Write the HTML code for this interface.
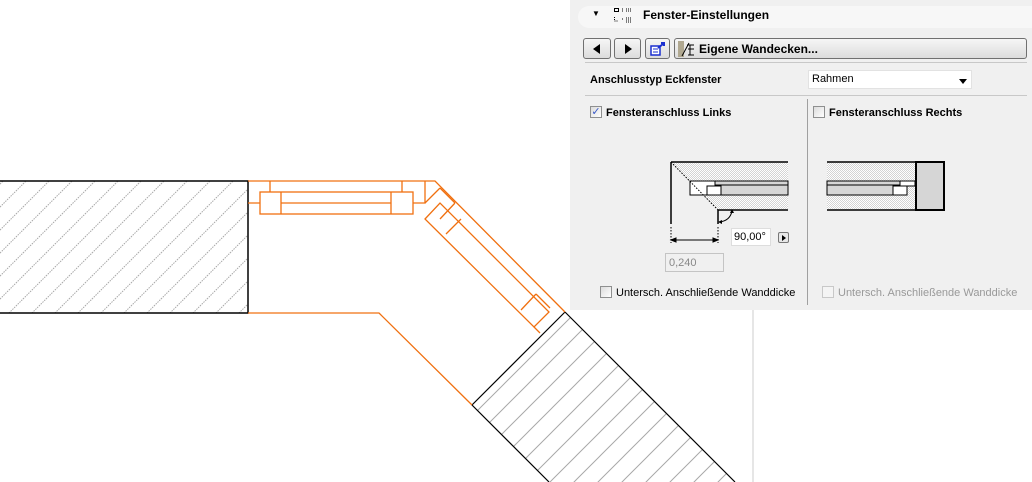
<!DOCTYPE html>
<html><head><meta charset="utf-8"><style>
body{margin:0;width:1032px;height:482px;background:#fff;position:relative;overflow:hidden;font-family:"Liberation Sans",Arial,sans-serif}
.a{position:absolute}
#panel{left:570px;top:0;width:462px;height:310px;background:#f0f0f0}
.btn{position:absolute;top:38px;height:21px;border:1px solid #707070;border-radius:3px;background:linear-gradient(#f6f6f6,#dcdcdc);box-sizing:border-box}
.b{font-weight:bold;font-size:11px;color:#000}
.cb{position:absolute;width:12px;height:12px;border:1px solid #8e8f8f;background:linear-gradient(135deg,#dcdcdc,#fff);box-sizing:border-box}
</style></head><body>
<svg class="a" style="left:0;top:0" width="1032" height="482">
<defs>
<pattern id="h1" patternUnits="userSpaceOnUse" width="23" height="23"><path d="M-11.5,11.5 L11.5,-11.5 M0,23 L23,0 M11.5,34.5 L34.5,11.5" stroke="#a8a8a8" stroke-width="1" stroke-dasharray="1.5,1"/></pattern>
<pattern id="h2" patternUnits="userSpaceOnUse" width="24" height="24"><path d="M-12,12 L12,-12 M0,24 L24,0 M12,36 L36,12" stroke="#a8a8a8" stroke-width="1"/></pattern>
</defs>
<rect x="0" y="181" width="248" height="132" fill="url(#h1)"/>
<path d="M0,181H248V313H0" fill="none" stroke="#000" stroke-width="1.5"/>
<polygon points="565,312 472,405 549,482 735,482" fill="url(#h2)"/>
<path d="M565,312L472,405L549,482M565,312L735,482" fill="none" stroke="#000" stroke-width="1.2"/>
<g fill="none" stroke="#f07010" stroke-width="1.3">
<path d="M248,181H435L565,312"/>
<path d="M248,313H379L472,405"/>
<rect x="260" y="192" width="153" height="22"/>
<path d="M281,192V214M391,192V214M281,203H391M248,203H260M413,203H425V181M270,181V192M402,181V192"/>
<polygon points="425,219 440,203 549,312 534,327"/>
<path d="M425,203L440,188M440,188L455,203M455,203L440,219M446,234L461,219M521,310L536,294M536,294L550,308M534,327L540,333"/>
</g>
<line x1="753" y1="310" x2="753" y2="482" stroke="#e6e6e6" stroke-width="2"/>
</svg>
<div id="panel" class="a">
<div class="a" style="left:8px;top:6px;width:454px;height:22px;background:#f7f7f7;border-radius:11px 0 0 11px"></div>
<div class="a" style="left:22px;top:9px;font-size:8px">&#9660;</div>
<svg class="a" style="left:43px;top:7px" width="20" height="20"><g stroke="#000" stroke-width="1" fill="none"><rect x="1.5" y="1.5" width="4" height="3"/><path d="M9,2h2M9,4h2M13,2h6M13,4h6M1.5,10v4M1.5,14h4M9,12h2M13,11h6M13,13h6M13,15h6" stroke-dasharray="1,1"/></g></svg>
<div class="a b" style="left:73px;top:8px;font-size:12px">Fenster-Einstellungen</div>
<div class="btn" style="left:13px;width:28px"><div class="a" style="left:9px;top:5px;width:0;height:0;border-top:5px solid transparent;border-bottom:5px solid transparent;border-right:7px solid #000"></div></div>
<div class="btn" style="left:44px;width:27px"><div class="a" style="left:10px;top:5px;width:0;height:0;border-top:5px solid transparent;border-bottom:5px solid transparent;border-left:7px solid #000"></div></div>
<div class="btn" style="left:75px;width:25px"><svg class="a" style="left:3px;top:2px" width="18" height="16"><rect x="2" y="5" width="9" height="9" fill="#fff" stroke="#1a2fd0" stroke-width="1.5"/><path d="M4,8h5M4,11h5" stroke="#1a2fd0"/><path d="M9,7L14,3M12,2h3v3" stroke="#1a2fd0" stroke-width="2" fill="none"/></svg></div>
<div class="btn" style="left:104px;width:353px"><svg class="a" style="left:3px;top:2px" width="18" height="16"><path d="M0,0h6v16h-6z" fill="#b0a890"/><path d="M4,15L11,2M9,4h7M10,8h6M12,4v10M10,14h6" stroke="#000" fill="none"/></svg><div class="a b" style="left:24px;top:3px;font-size:12px">Eigene Wandecken...</div></div>
<div class="a" style="left:15px;top:62px;width:442px;height:1px;background:#c8c8c8"></div>
<div class="a b" style="left:20px;top:74px">Anschlusstyp Eckfenster</div>
<div class="a" style="left:238px;top:70px;width:164px;height:19px;background:#fff;border:1px solid #e2e2e2;box-sizing:border-box;font-size:11px"><span class="a" style="left:3px;top:2px">Rahmen</span><div class="a" style="left:150px;top:8px;border-left:4px solid transparent;border-right:4px solid transparent;border-top:5px solid #000"></div></div>
<div class="a" style="left:15px;top:95px;width:442px;height:1px;background:#c8c8c8"></div>
<div class="a" style="left:237px;top:99px;width:1px;height:206px;background:#a0a0a0"></div>
<div class="cb" style="left:20px;top:106px;font-size:11px;line-height:10px;color:#3a5ac8;text-align:center">&#10003;</div>
<div class="a b" style="left:36px;top:107px">Fensteranschluss Links</div>
<div class="cb" style="left:243px;top:106px"></div>
<div class="a b" style="left:259px;top:107px">Fensteranschluss Rechts</div>
<svg class="a" style="left:90px;top:155px" width="130" height="95">
<defs><pattern id="d" patternUnits="userSpaceOnUse" width="2" height="2"><rect width="2" height="2" fill="#fff"/><rect width="1" height="1" fill="#d4d4d4"/><rect x="1" y="1" width="1" height="1" fill="#d4d4d4"/></pattern></defs>
<polygon points="11,7 128,7 128,55 58,55" fill="url(#d)"/>
<rect x="30" y="26" width="98" height="14" fill="#fff" stroke="#000"/>
<rect x="55" y="26" width="73" height="4" fill="#d6d6d6" stroke="#000"/>
<rect x="61" y="30" width="67" height="10" fill="#d6d6d6" stroke="#000"/>
<rect x="47" y="31" width="14" height="9" fill="#fff" stroke="#000"/>
<path d="M11,7H128M11,7V69M58,55H128M58,55V69" stroke="#000" stroke-width="1.5" fill="none"/>
<path d="M11,7L58,55M11,72V88M58,72V88" stroke="#000" stroke-dasharray="1.5,1.5" fill="none"/>
<path d="M11,85H58M11,85l5,-2v4zM58,85l-5,-2v4z" stroke="#000" fill="#000"/>
<path d="M59,67Q70,66 72,56" stroke="#000" fill="none"/><path d="M72,54l-2,4h4z M58,67l4,-2v4z" fill="#000"/>
</svg>
<div class="a" style="left:161px;top:228px;width:40px;height:18px;background:#fff;border:1px solid #ddd;box-sizing:border-box;font-size:11px"><span class="a" style="left:2px;top:2px">90,00°</span></div>
<div class="a" style="left:208px;top:232px;width:11px;height:11px;border:1px solid #777;border-radius:2px;background:#e8e8e8;box-sizing:border-box"><div class="a" style="left:3px;top:1.5px;border-top:3px solid transparent;border-bottom:3px solid transparent;border-left:4px solid #000"></div></div>
<div class="a" style="left:95px;top:253px;width:59px;height:19px;background:#f0f0f0;border:1px solid #c4c4c4;box-sizing:border-box;font-size:11px;color:#888"><span class="a" style="left:3px;top:3px">0,240</span></div>
<svg class="a" style="left:255px;top:155px" width="125" height="60">
<defs><pattern id="d2" patternUnits="userSpaceOnUse" width="2" height="2"><rect width="2" height="2" fill="#fff"/><rect width="1" height="1" fill="#d4d4d4"/><rect x="1" y="1" width="1" height="1" fill="#d4d4d4"/></pattern></defs>
<rect x="2" y="7" width="89" height="48" fill="url(#d2)"/>
<rect x="2" y="26" width="73" height="4" fill="#d6d6d6" stroke="#000"/>
<rect x="2" y="30" width="66" height="10" fill="#d6d6d6" stroke="#000"/>
<rect x="68" y="31" width="14" height="9" fill="#fff" stroke="#000"/>
<rect x="75" y="26" width="15" height="5" fill="#fff" stroke="#000"/>
<path d="M2,7H91M2,55H91" stroke="#000" stroke-width="1.5"/>
<rect x="91" y="7" width="28" height="48" fill="#d6d6d6" stroke="#000" stroke-width="2"/>
</svg>
<div class="cb" style="left:30px;top:286px"></div>
<div class="a" style="left:46px;top:287px;font-size:11px">Untersch. Anschließende Wanddicke</div>
<div class="cb" style="left:252px;top:286px;border-color:#c8c8c8;background:#f4f4f4"></div>
<div class="a" style="left:268px;top:287px;font-size:11px;color:#999">Untersch. Anschließende Wanddicke</div>
</div>
</body></html>
